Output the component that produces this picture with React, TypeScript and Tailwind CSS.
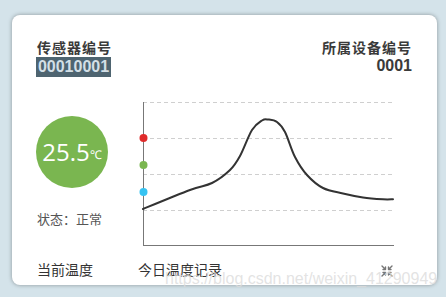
import React from 'react';

type Pt = [number, number];

// temperature curve, in svg coords
const curvePts: Pt[] = [
  [5, 114], [52, 95], [74, 88], [92, 75], [102, 61], [114, 35], [124, 25.5], [130, 24.5],
  [139, 27], [147, 37], [157, 62], [169, 80], [185, 93], [205, 98.5], [225, 102.5], [245, 104.3], [255, 104.3],
];

const smoothPath = (pts: Pt[]) => {
  let d = `M${pts[0][0]},${pts[0][1]}`;
  for (let i = 0; i < pts.length - 1; i++) {
    const p0 = pts[i - 1] || pts[i];
    const p1 = pts[i];
    const p2 = pts[i + 1];
    const p3 = pts[i + 2] || p2;
    const c1x = p1[0] + (p2[0] - p0[0]) / 6;
    const c1y = p1[1] + (p2[1] - p0[1]) / 6;
    const c2x = p2[0] - (p3[0] - p1[0]) / 6;
    const c2y = p2[1] - (p3[1] - p1[1]) / 6;
    d += ` C${c1x.toFixed(1)},${c1y.toFixed(1)} ${c2x.toFixed(1)},${c2y.toFixed(1)} ${p2[0]},${p2[1]}`;
  }
  return d;
};

const TempChart: React.FC = () => (
  <svg width="262" height="155" viewBox="0 0 262 155" className="block">
    {[7, 43, 79, 115].map((y) => (
      <line key={y} x1="5" y1={y + 0.5} x2="256" y2={y + 0.5} stroke="#cfcfcf" strokeWidth="1" strokeDasharray="4 3" />
    ))}
    <line x1="5.5" y1="7" x2="5.5" y2="151" stroke="#777" strokeWidth="1" />
    <line x1="5" y1="150.5" x2="256" y2="150.5" stroke="#777" strokeWidth="1" />
    <path d={smoothPath(curvePts)} fill="none" stroke="#333" strokeWidth="2" strokeLinecap="round" />
    <circle cx="5.5" cy="43" r="4" fill="#e02b2b" />
    <circle cx="5.5" cy="70" r="4" fill="#7ab650" />
    <circle cx="5.5" cy="97" r="4" fill="#36c3f2" />
  </svg>
);

const ShrinkIcon: React.FC = () => (
  <svg width="12" height="12" viewBox="0 0 12 12" fill="none" stroke="#777" strokeWidth="1.4" strokeLinecap="round" strokeLinejoin="round">
    <path d="M1 1 L4.5 4.5 M4.5 2 V4.5 H2" />
    <path d="M11 1 L7.5 4.5 M7.5 2 V4.5 H10" />
    <path d="M1 11 L4.5 7.5 M4.5 10 V7.5 H2" />
    <path d="M11 11 L7.5 7.5 M7.5 10 V7.5 H10" />
  </svg>
);

const App: React.FC = () => {
  return (
    <div className="w-[446px] h-[297px] bg-[#d4e3ea] pt-[15px] pl-[12px] overflow-hidden font-['Liberation_Sans','Noto_Sans_CJK_SC',sans-serif]">
      <div className="relative w-[425px] h-[270px] rounded-[8px] bg-white shadow-[0_0_4px_rgba(0,0,0,0.35)] pt-[25px] px-[25px]">
        {/* Header */}
        <div className="flex justify-between">
          <div className="flex flex-col items-start">
            <div className="text-[14px] leading-[17px] font-bold text-[#3a3a3a] tracking-[1px]">传感器编号</div>
            <div className="w-[75px] h-[20px] -ml-[1px] bg-[#4e6470] text-[#d3dfe6] text-[16px] font-bold leading-[20px] text-center">
              00010001
            </div>
          </div>
          <div className="flex flex-col items-end">
            <div className="text-[14px] leading-[17px] font-bold text-[#3a3a3a] tracking-[1px]">所属设备编号</div>
            <div className="text-[16px] leading-[18px] font-bold text-[#3a3a3a]">0001</div>
          </div>
        </div>

        {/* Body */}
        <div className="flex mt-[18px]">
          <div className="w-[101px] flex flex-col">
            <div className="mt-[21px] -ml-[1px] w-[72px] h-[72px] rounded-full bg-[#7ab650] flex items-center justify-center text-white font-['Open_Sans',sans-serif]">
              <span className="text-[24px] leading-none">25.5</span>
              <span className="text-[12px] leading-none mt-[6px]">℃</span>
            </div>
            <div className="mt-[22px] text-[13px] leading-[18px] text-[#555] font-['Noto_Sans_CJK_SC',sans-serif]">
              状态：正常
            </div>
          </div>
          <TempChart />
        </div>

        {/* Footer */}
        <div className="flex items-center mt-[10px] text-[14px] leading-[18px] text-[#333] font-['Noto_Sans_CJK_SC',sans-serif]">
          <div className="w-[101px]">当前温度</div>
          <div>今日温度记录</div>
          <div className="ml-auto mr-[19px] mt-[4px]">
            <ShrinkIcon />
          </div>
        </div>

        <div className="absolute left-[153px] top-[254px] text-[16px] leading-[20px] text-[#dcdcdc]/80 whitespace-nowrap pointer-events-none">
          https://blog.csdn.net/weixin_41290949
        </div>
      </div>
    </div>
  );
};

export default App;
